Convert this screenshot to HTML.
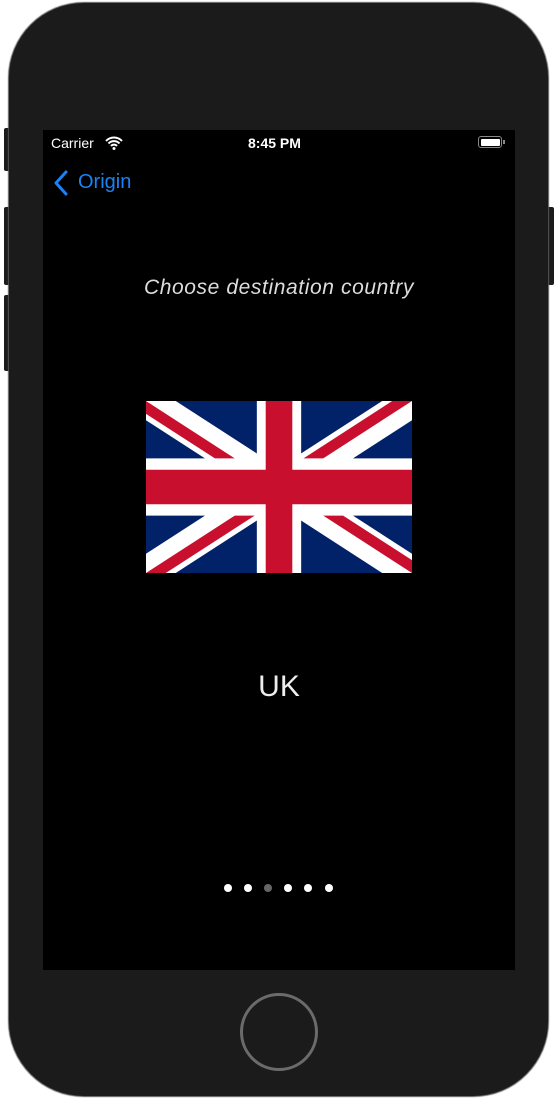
<!DOCTYPE html>
<html><head><style>
body{margin:0;width:558px;height:1103px;background:#fff;position:relative;overflow:hidden;font-family:"Liberation Sans",sans-serif}
.ph{position:absolute;left:9px;top:3px;width:539px;height:1093px;background:#1b1b1b;border-radius:75px;box-shadow:0 0 1px 1px #555}
.btn{position:absolute;background:#1b1b1b;width:8px;border-radius:2px}
.scr{position:absolute;left:43px;top:130px;width:472px;height:840px;background:#000}
.t{position:absolute;color:#fff}
.dot{position:absolute;top:884px;width:8px;height:8px;border-radius:50%;background:#fff}
</style></head><body>
<div class="btn" style="left:4px;top:128px;height:43px"></div>
<div class="btn" style="left:4px;top:207px;height:78px"></div>
<div class="btn" style="left:4px;top:295px;height:76px"></div>
<div class="btn" style="left:546px;top:207px;height:78px"></div>
<div class="ph"></div>
<div class="scr"></div>
<div class="t" style="left:51px;top:135px;font-size:14px">Carrier</div>
<svg style="position:absolute;left:105px;top:136px" width="18" height="14" viewBox="0 0 18 14"><path d="M1 5a11 11 0 0 1 16 0M3.5 7.5a7.5 7.5 0 0 1 11 0M6 10a4 4 0 0 1 6 0" stroke="#fff" stroke-width="2" fill="none"/><circle cx="9" cy="12.5" r="1.5" fill="#fff"/></svg>
<div class="t" style="left:248px;top:135px;font-size:14px;font-weight:bold">8:45 PM</div>
<div style="position:absolute;left:478px;top:136px;width:24px;height:12px;border:1px solid #888;border-radius:3px;box-sizing:border-box;padding:1.5px"><div style="background:#fff;height:100%;border-radius:1px"></div></div>
<div style="position:absolute;left:503px;top:140px;width:2px;height:4px;background:#888"></div>
<svg style="position:absolute;left:53px;top:170px" width="16" height="26"><path d="M13 2L3 13l10 11" stroke="#1a82f7" stroke-width="3" fill="none" stroke-linecap="round" stroke-linejoin="round"/></svg>
<div class="t" style="left:78px;top:171px;font-size:20px;color:#1a82f7">Origin</div>
<div class="t" style="left:0;width:558px;text-align:center;top:276px;font-size:21px;letter-spacing:0.6px;font-style:italic;color:#ddd">Choose destination country</div>
<svg style="position:absolute;left:146px;top:401px" width="266" height="172" viewBox="0 0 60 30" preserveAspectRatio="none">
<clipPath id="s"><path d="M0,0v30h60V0z"/></clipPath><clipPath id="t"><path d="M30,15h30v15zv15H0zH0V0zV0h30z"/></clipPath>
<g clip-path="url(#s)"><path d="M0,0v30h60V0z" fill="#012169"/><path d="M0,0L60,30M60,0L0,30" stroke="#fff" stroke-width="6"/><path d="M0,0L60,30M60,0L0,30" clip-path="url(#t)" stroke="#C8102E" stroke-width="4"/><path d="M30,0v30M0,15h60" stroke="#fff" stroke-width="10"/><path d="M30,0v30M0,15h60" stroke="#C8102E" stroke-width="6"/></g></svg>
<div class="t" style="left:0;width:558px;text-align:center;top:670px;font-size:30px;color:#eee">UK</div>
<div class="dot" style="left:224px"></div><div class="dot" style="left:244px"></div><div class="dot" style="left:264px;background:#666"></div><div class="dot" style="left:284px"></div><div class="dot" style="left:304px"></div><div class="dot" style="left:325px"></div>
<div style="position:absolute;left:240px;top:993px;width:78px;height:78px;border:3px solid #6b6b6b;border-radius:50%;box-sizing:border-box"></div>
</body></html>
